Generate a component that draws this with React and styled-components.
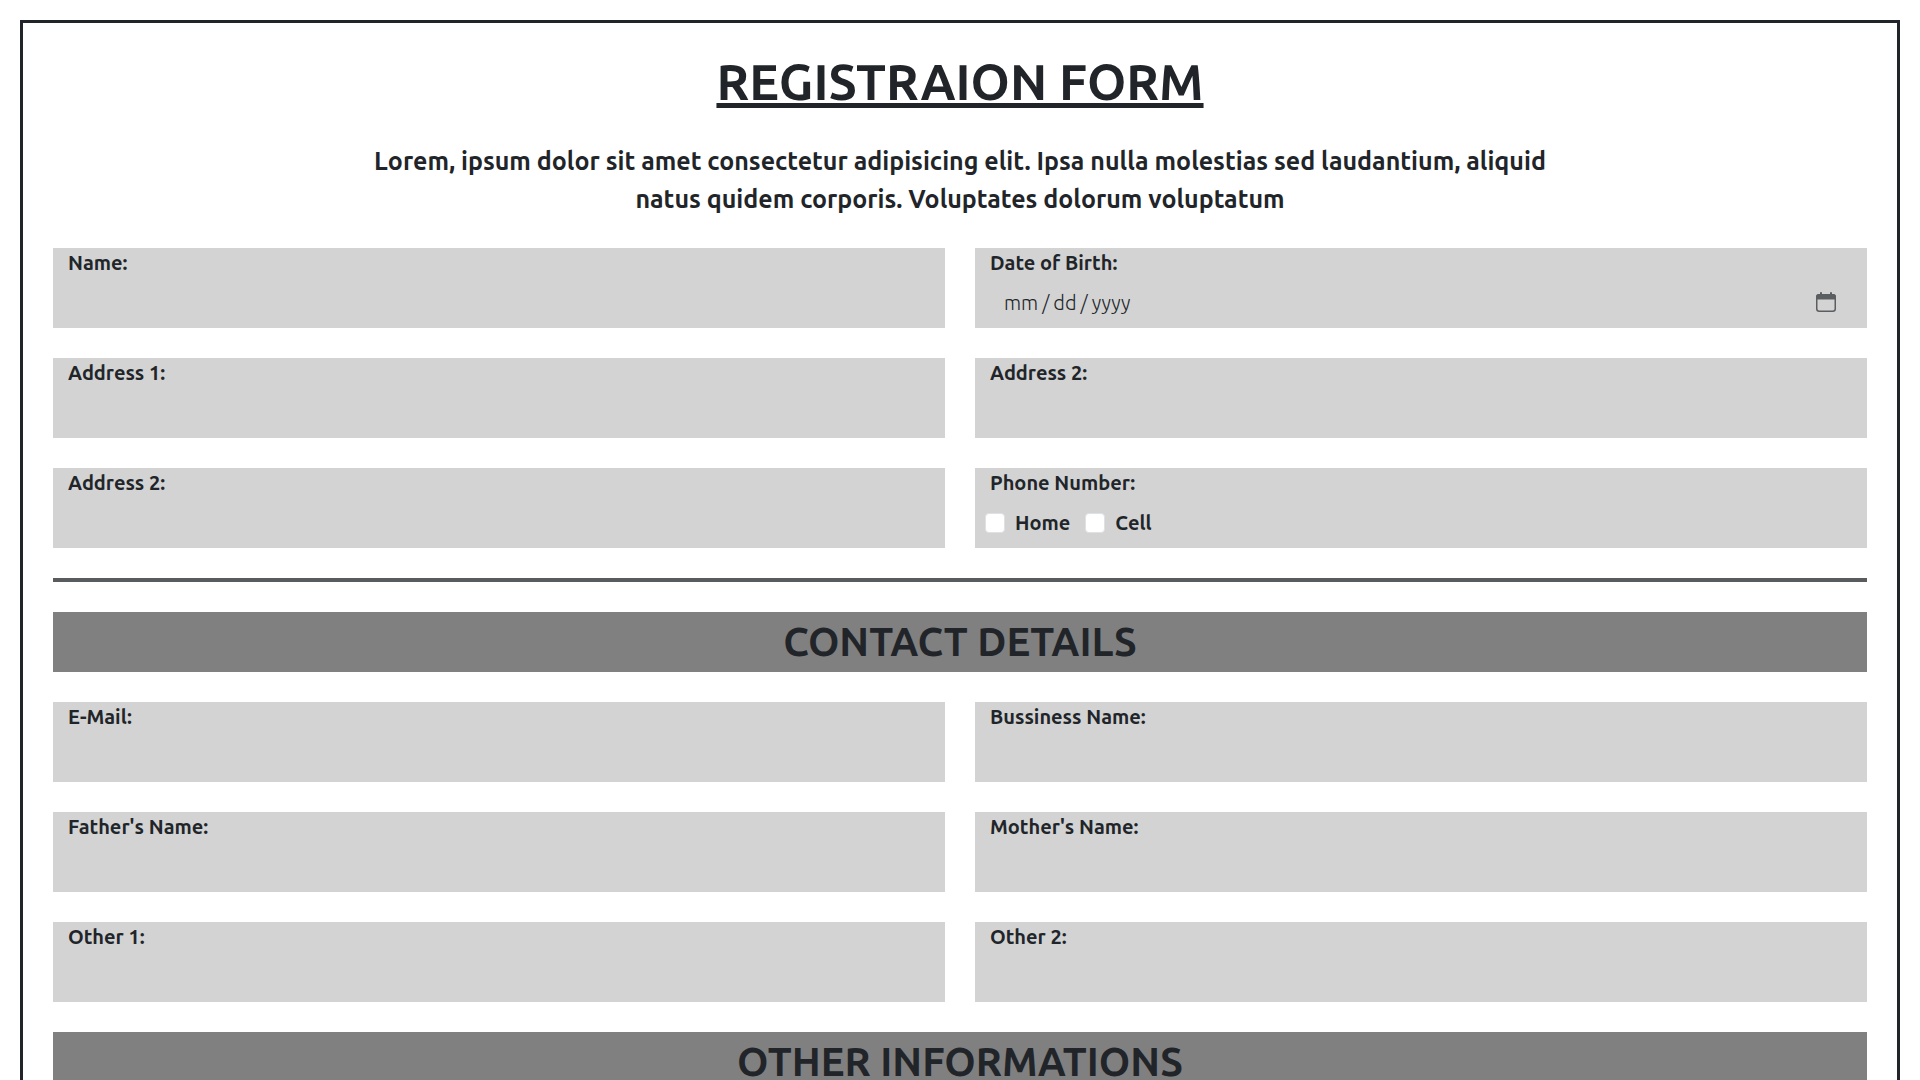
import React from "react";
import styled, { createGlobalStyle } from "styled-components";

const GlobalStyle = createGlobalStyle`
  *, *::before, *::after {
    box-sizing: border-box;
  }

  body {
    margin: 0;
    background: #fff;
    color: #212529;
    font-family: Ubuntu, "Open Sans", sans-serif;
    font-size: 20px;
    font-weight: 600;
    line-height: 30px;
  }
`;

const Form = styled.form`
  display: flex;
  flex-direction: column;
  gap: 30px;
  margin: 20px;
  padding: 30px;
  border: 3px solid #212529;
`;

const Title = styled.h1`
  margin: 0;
  padding-bottom: 4px;
  font-size: 50px;
  font-weight: 600;
  line-height: 56px;
  text-align: center;
  text-decoration: underline;
`;

const Intro = styled.p`
  max-width: 1200px;
  margin: 0 auto;
  font-size: 25px;
  line-height: 1.5;
  text-align: center;
`;

const Grid = styled.div`
  display: grid;
  grid-template-columns: repeat(2, minmax(0, 1fr));
  gap: 30px;

  @media (max-width: 700px) {
    grid-template-columns: minmax(0, 1fr);
  }
`;

const Field = styled.div`
  display: flex;
  flex-direction: column;
  min-height: 80px;
  background: #d3d3d3;
`;

const FieldLabel = styled.label`
  padding: 0 15px;
`;

const Input = styled.input`
  width: 100%;
  height: 50px;
  padding: 0 28px;
  border: 0;
  outline: 0;
  background: transparent;
  color: #212529;
  font-family: inherit;
  font-size: 20px;
  font-weight: 300;
  line-height: 30px;
`;

const DateInput = styled(Input)`
  &::-webkit-datetime-edit-month-field,
  &::-webkit-datetime-edit-day-field,
  &::-webkit-datetime-edit-year-field {
    color: #212529;
  }

  &::-webkit-datetime-edit-text {
    padding: 0 3px;
    color: #212529;
  }

  &::-webkit-calendar-picker-indicator {
    opacity: 0;
  }
`;

const DateControl = styled.div`
  position: relative;
  display: flex;
`;

const CalendarIcon = styled.svg`
  position: absolute;
  top: 14px;
  right: 31px;
  width: 20px;
  height: 20px;
  color: #5b5e61;
  pointer-events: none;
`;

const Options = styled.fieldset`
  min-width: 0;
  min-height: 80px;
  margin: 0;
  padding: 0;
  border: 0;
  background: #d3d3d3;
`;

const OptionsLegend = styled.legend`
  float: left;
  width: 100%;
  padding: 0 15px;
`;

const OptionList = styled.div`
  clear: both;
  display: flex;
  align-items: center;
  gap: 15px;
  height: 50px;
  padding: 0 10px;
`;

const Option = styled.label`
  display: flex;
  align-items: center;
  gap: 10px;
`;

const Checkbox = styled.input`
  appearance: none;
  width: 20px;
  height: 20px;
  margin: 0;
  border: 1px solid #dee2e6;
  border-radius: 4px;
  background: #fff;

  &:checked {
    border-color: #0d6efd;
    background: #0d6efd;
  }
`;

const Divider = styled.hr`
  width: 100%;
  margin: 0;
  border: 0;
  border-top: 4px solid #595c5f;
`;

const SectionTitle = styled.h2`
  margin: 0;
  background: #808080;
  font-size: 40px;
  font-weight: 600;
  line-height: 60px;
  text-align: center;
`;

function TextField({ id, label, type = "text" }) {
  return (
    <Field>
      <FieldLabel htmlFor={id}>{label}</FieldLabel>
      <Input id={id} name={id} type={type} />
    </Field>
  );
}

function DateField({ id, label }) {
  return (
    <Field>
      <FieldLabel htmlFor={id}>{label}</FieldLabel>
      <DateControl>
        <DateInput id={id} name={id} type="date" />
        <CalendarIcon viewBox="0 0 20 20" aria-hidden="true">
          <rect x="0.75" y="2.75" width="18.5" height="16.5" rx="2.5" fill="none" stroke="currentColor" strokeWidth="1.5" />
          <path d="M0 7.5V5a3 3 0 0 1 3-3h1V1a1 1 0 0 1 2 0v1h8V1a1 1 0 0 1 2 0v1h1a3 3 0 0 1 3 3v2.5z" fill="currentColor" />
        </CalendarIcon>
      </DateControl>
    </Field>
  );
}

export default function App() {
  return (
    <>
      <GlobalStyle />
      <Form>
        <Title>REGISTRAION FORM</Title>
        <Intro>
          Lorem, ipsum dolor sit amet consectetur adipisicing elit. Ipsa nulla
          molestias sed laudantium, aliquid natus quidem corporis. Voluptates
          dolorum voluptatum
        </Intro>
        <Grid>
          <TextField id="name" label="Name:" />
          <DateField id="birth" label="Date of Birth:" />
          <TextField id="address-1" label="Address 1:" />
          <TextField id="address-2" label="Address 2:" />
          <TextField id="address-3" label="Address 2:" />
          <Options>
            <OptionsLegend>Phone Number:</OptionsLegend>
            <OptionList>
              <Option>
                <Checkbox type="checkbox" name="phone-home" />
                Home
              </Option>
              <Option>
                <Checkbox type="checkbox" name="phone-cell" />
                Cell
              </Option>
            </OptionList>
          </Options>
        </Grid>
        <Divider />
        <SectionTitle>CONTACT DETAILS</SectionTitle>
        <Grid>
          <TextField id="email" label="E-Mail:" type="email" />
          <TextField id="business" label="Bussiness Name:" />
          <TextField id="father" label="Father's Name:" />
          <TextField id="mother" label="Mother's Name:" />
          <TextField id="other-1" label="Other 1:" />
          <TextField id="other-2" label="Other 2:" />
        </Grid>
        <SectionTitle>OTHER INFORMATIONS</SectionTitle>
      </Form>
    </>
  );
}
